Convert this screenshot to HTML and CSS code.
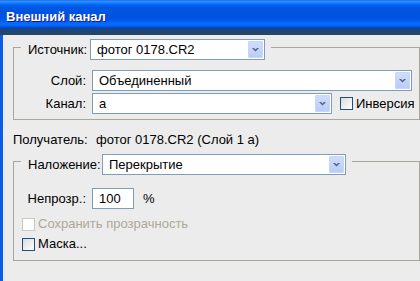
FILE: index.html
```html
<!DOCTYPE html>
<html lang="ru">
<head>
  <meta charset="UTF-8">
  <title>Внешний канал</title>
  <link rel="stylesheet" href="styles.css">
</head>
<body>

<div class="window">
  <div class="titlebar">Внешний канал</div>
  <div class="content">

    <fieldset class="group source">
      <legend>
        <span class="lbl-head">Источник:</span>
        <div class="combo c-source">
          <span class="value">фотог 0178.CR2</span>
          <span class="arrow"><svg width="15" height="17" viewBox="0 0 15 17"><polygon points="4,7 6,7 7.5,8.5 9,7 11,7 7.5,10.5" fill="#4d6185"/></svg></span>
        </div>
      </legend>
      <div class="row">
        <span class="lbl">Слой:</span>
        <div class="combo c-layer">
          <span class="value">Объединенный</span>
          <span class="arrow"><svg width="15" height="17" viewBox="0 0 15 17"><polygon points="4,7 6,7 7.5,8.5 9,7 11,7 7.5,10.5" fill="#4d6185"/></svg></span>
        </div>
      </div>
      <div class="row">
        <span class="lbl">Канал:</span>
        <div class="combo c-channel">
          <span class="value">а</span>
          <span class="arrow"><svg width="15" height="17" viewBox="0 0 15 17"><polygon points="4,7 6,7 7.5,8.5 9,7 11,7 7.5,10.5" fill="#4d6185"/></svg></span>
        </div>
        <label class="check invert"><span class="box"></span>Инверсия</label>
      </div>
    </fieldset>

    <div class="target">
      <span class="target-lbl">Получатель:</span>
      <span>фотог 0178.CR2 (Слой 1 а)</span>
    </div>

    <fieldset class="group blend">
      <legend>
        <span class="lbl-head wide">Наложение:</span>
        <div class="combo c-blend">
          <span class="value">Перекрытие</span>
          <span class="arrow"><svg width="15" height="17" viewBox="0 0 15 17"><polygon points="4,7 6,7 7.5,8.5 9,7 11,7 7.5,10.5" fill="#4d6185"/></svg></span>
        </div>
      </legend>
      <div class="row">
        <span class="lbl">Непрозр.:</span>
        <div class="field">100</div>
        <span class="unit">%</span>
      </div>
      <label class="check line disabled"><span class="box"></span>Сохранить прозрачность</label>
      <label class="check line second"><span class="box"></span>Маска...</label>
    </fieldset>

  </div>
</div>
<div class="desktop"></div>

</body>
</html>
```

FILE: styles.css
```css
* {
  margin: 0;
  padding: 0;
  box-sizing: border-box;
}
body {
  width: 420px;
  height: 281px;
  overflow: hidden;
  font-family: "Liberation Sans", Arial, sans-serif;
  font-size: 13px;
  line-height: 16px;
  color: #000;
  background: #24466a;
}

.window {
  width: 420px;
}

.titlebar {
  height: 29px;
  padding: 4px 0 0 6px;
  line-height: 25px;
  font-weight: bold;
  color: #fff;
  text-shadow: 1px 1px 0 #0f1a8a;
  background: linear-gradient(to bottom,
    #0a5ae6 0px, #3b92ff 1px, #2a89ff 2px, #137cff 3px, #066ffb 4px,
    #0262ee 5px, #0058e4 7px, #0053de 14px, #0054e2 19px, #005cf2 21px,
    #0868ff 23px, #0a6cff 25px, #0060ee 26px, #004ed6 27px, #0040b4 29px);
}

.content {
  height: 250px;
  padding-left: 10px;
  background: #ececec;
  border-left: 3px solid #0c5be9;
  border-bottom: 3px solid #0738cf;
}

.desktop {
  height: 2px;
  background: #1e3b5a;
}

/* группы */
.group {
  border: 1px solid #a8a79c;
  min-inline-size: 0;
}
.group legend {
  display: flex;
  align-items: center;
  margin-left: 7px;
  padding: 4px 6px 0 7px;
}
.source {
  margin-top: 6px;
  padding: 10px 0 5px 0;
}
.blend {
  padding: 13px 0 8px 0;
}
.blend legend {
  padding-top: 6px;
}

.lbl-head {
  width: 58px;
  margin-right: 4px;
  text-align: right;
}
.lbl-head.wide {
  width: 70px;
}

.row {
  display: flex;
  align-items: center;
  height: 21px;
}
.row + .row {
  margin-top: 2px;
}
.lbl {
  width: 72px;
  margin-right: 6px;
  text-align: right;
}

/* выпадающие списки */
.combo {
  display: flex;
  align-items: center;
  height: 21px;
  padding: 1px;
  background: #fff;
  border: 1px solid #7f9db9;
}
.combo .value {
  flex: 1;
  padding-left: 5px;
  white-space: nowrap;
}
.combo .arrow {
  display: block;
  width: 15px;
  height: 17px;
  border-radius: 2px;
  background: linear-gradient(to bottom, #d2ddfb, #b9cbf7);
  box-shadow: inset 0 0 0 1px #c6d6fc;
}
.combo .arrow svg {
  display: block;
}
.c-source { width: 175px; }
.c-layer { width: 320px; }
.c-channel { width: 240px; }
.c-blend { width: 244px; }

.field {
  width: 42px;
  height: 21px;
  padding: 2px 0 0 6px;
  background: #fff;
  border: 1px solid #7f9db9;
}
.unit {
  margin-left: 9px;
}

/* флажки */
.check {
  display: flex;
  align-items: center;
  height: 16px;
}
.check .box {
  width: 13px;
  height: 13px;
  margin-right: 3px;
  border: 1px solid #1c5180;
  background: linear-gradient(135deg, #dcdcd7, #fff);
}
.invert {
  margin-left: 8px;
}
.check.line {
  padding-left: 8px;
  margin-top: 7px;
}
.check.second {
  margin-top: 4px;
}
.check.disabled {
  color: #aca899;
}
.check.disabled .box {
  border-color: #cac8bb;
  background: #fff;
}

.target {
  display: flex;
  margin-top: 12px;
}
.target-lbl {
  width: 83px;
}
```
